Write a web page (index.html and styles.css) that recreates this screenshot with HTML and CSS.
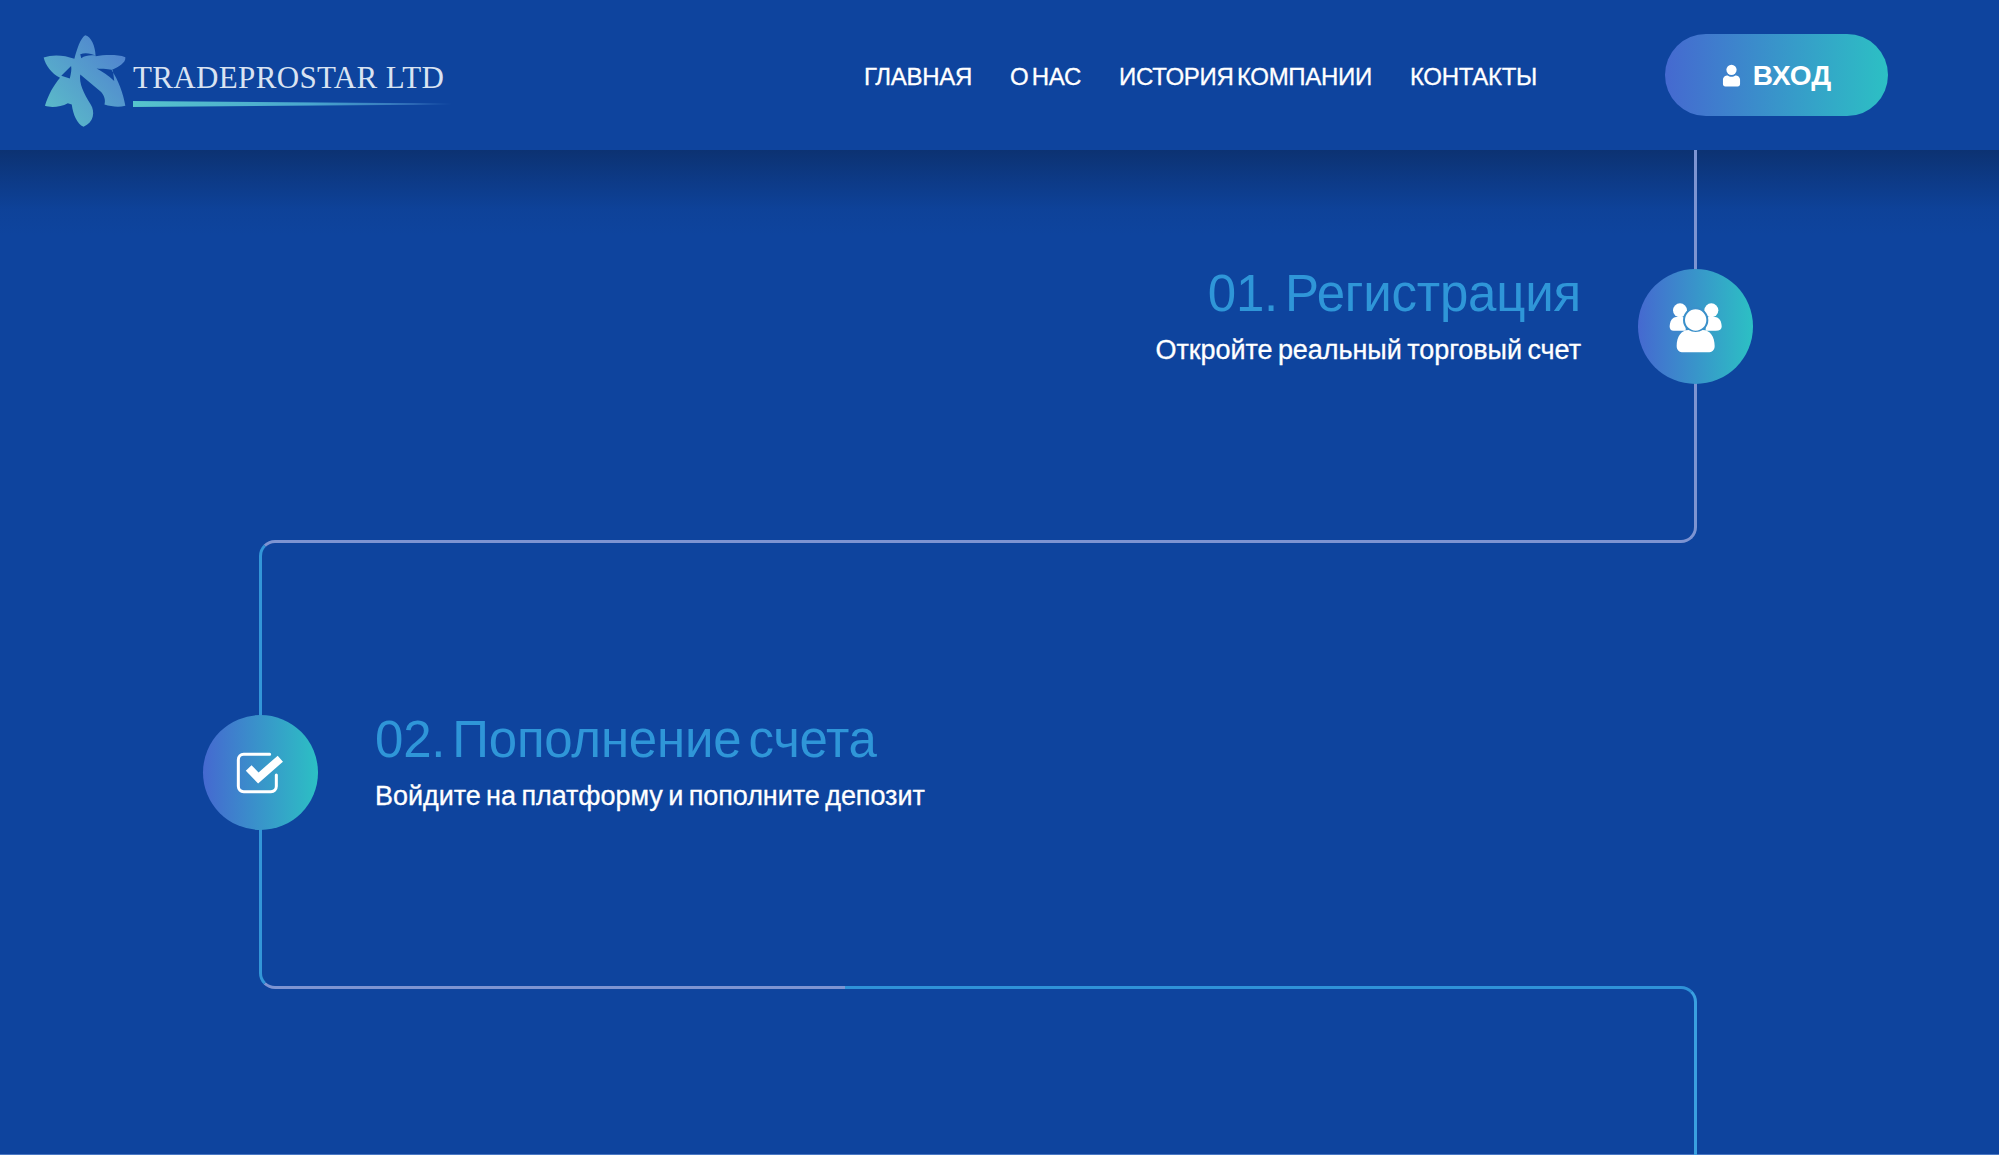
FILE: index.html
```html
<!DOCTYPE html>
<html lang="ru">
<head>
<meta charset="utf-8">
<title>TRADEPROSTAR LTD</title>
<link rel="stylesheet" href="styles.css">
</head>
<body>
<header class="header">
  <a class="logo" href="#">
    <svg class="logo-mark" viewBox="36 26 254 284" aria-hidden="true">
      <defs>
        <linearGradient id="logoFill" x1="0" y1="1" x2="1" y2="0">
          <stop offset="0" stop-color="#5cc2c8"/>
          <stop offset="1" stop-color="#4f7cd0"/>
        </linearGradient>
      </defs>
      <path fill="url(#logoFill)" fill-rule="evenodd" d="M165 28C183 32 196 60 197 92C225 88 262 86 288 95C290 112 268 124 246 134C266 165 282 205 288 244C266 250 245 246 224 240C228 228 224 214 214 202L150 148C146 175 160 205 182 240C196 262 192 295 160 308C140 300 128 270 124 240L112 236C90 248 60 250 42 244C52 210 68 182 88 158C62 145 44 120 38 96C65 86 100 88 132 100C140 70 150 38 165 28ZM122 122L92 152L118 160C122 145 124 132 122 122ZM200 130C220 133 240 130 250 136L254 168C235 150 218 140 200 130ZM150 86C165 80 185 84 197 90C180 88 165 90 153 98Z"/>
    </svg>
    <span class="logo-text">
      <span class="logo-name">TRADEPROSTAR LTD</span>
      <span class="logo-rule"></span>
    </span>
  </a>
  <nav class="nav">
    <a href="#">ГЛАВНАЯ</a>
    <a href="#">О НАС</a>
    <a href="#">ИСТОРИЯ КОМПАНИИ</a>
    <a href="#">КОНТАКТЫ</a>
  </nav>
  <a class="login" href="#">
    <svg class="login-icon" viewBox="0 0 20 24" aria-hidden="true">
      <circle cx="10" cy="6" r="5.4" fill="#fff"/>
      <path d="M1 21v-4.500C1 13.500 3.500 12 6 12c1 .8 2.500 1.300 4 1.300s3-.5 4-1.300c2.500 0 5 1.500 5 4.500V21c0 1.500-1 2.500-2.500 2.500h-13C2 23.500 1 22.500 1 21Z" fill="#fff"/>
    </svg>
    <span class="login-label">ВХОД</span>
  </a>
</header>

<main class="timeline">
  <section class="step step-one">
    <div class="step-copy">
      <h2 class="step-title">01. Регистрация</h2>
      <p class="step-text">Откройте реальный торговый счет</p>
    </div>
    <div class="step-badge">
      <svg viewBox="1 4 270 270" aria-hidden="true">
        <g fill="#fff">
          <circle cx="88" cy="89" r="21"/>
          <circle cx="182" cy="89" r="21"/>
          <path d="M57 138c0-16 8-29 20-29h18c6 0 10 5 10 12v29H69c-8 0-12-5-12-12Z"/>
          <path d="M213 138c0-16-8-29-20-29h-18c-6 0-10 5-10 12v29h30c12 0 18-5 18-12Z"/>
        </g>
        <circle class="badge-head" cx="135" cy="118" r="35"/>
        <path class="badge-body" d="M78 196c0-28 14-48 36-48 6 4 13 6 21 6s15-2 21-6c22 0 36 20 36 48 0 12-8 19-20 19H98c-12 0-20-7-20-19Z"/>
      </svg>
    </div>
  </section>

  <section class="step step-two">
    <div class="step-badge">
      <svg viewBox="4 8 240 240" aria-hidden="true">
        <path class="check-box" d="M150 72H72a16 16 0 0 0-16 16v80a16 16 0 0 0 16 16h82a16 16 0 0 0 16-16v-34"/>
        <path class="check-mark" d="M87 113l29 30 66-58"/>
      </svg>
    </div>
    <div class="step-copy">
      <h2 class="step-title">02. Пополнение счета</h2>
      <p class="step-text">Войдите на платформу и пополните депозит</p>
    </div>
  </section>

  <section class="step step-three"></section>
</main>
</body>
</html>
```

FILE: styles.css
```css
* {
  box-sizing: border-box;
}

html,
body {
  margin: 0;
  height: 100%;
}

body {
  position: relative;
  height: 1155px;
  overflow: hidden;
  background: #0e449e;
  font-family: "Liberation Sans", Arial, sans-serif;
  color: #fff;
}

body::after {
  content: "";
  position: absolute;
  left: 0;
  right: 0;
  bottom: 0;
  height: 1px;
  background: #4a78c4;
}

a {
  color: inherit;
  text-decoration: none;
}

.header {
  position: relative;
  z-index: 2;
  display: flex;
  align-items: center;
  height: 150px;
  padding: 0 111px 0 43px;
  background: #0e449e;
}

.header::after {
  content: "";
  position: absolute;
  top: 100%;
  left: 0;
  right: 0;
  height: 85px;
  background: linear-gradient(180deg, #0c3272 0%, rgba(12, 52, 120, 0.62) 35%, rgba(13, 60, 138, 0.25) 70%, rgba(14, 68, 158, 0) 100%);
  pointer-events: none;
}

.logo {
  display: flex;
  align-self: flex-start;
  align-items: flex-start;
  gap: 7px;
  margin-top: 34px;
}

.logo-mark {
  display: block;
  width: 83px;
  height: 94px;
  flex: none;
}

.logo-text {
  display: flex;
  flex-direction: column;
  width: 319px;
  padding-top: 26px;
}

.logo-name {
  font-family: "Liberation Serif", "Times New Roman", serif;
  font-size: 31px;
  line-height: 36px;
  letter-spacing: 0.35px;
  color: #d9e3f2;
  white-space: nowrap;
}

.logo-rule {
  height: 6px;
  margin-top: 5px;
  background: linear-gradient(90deg, #56c4cc 0%, #4aa8cf 55%, rgba(74, 140, 205, 0.6) 88%, rgba(74, 130, 200, 0) 100%);
  clip-path: polygon(0 0, 100% 40%, 100% 60%, 0 100%);
}

.nav {
  display: flex;
  gap: 38px;
  margin-left: 412px;
  padding-top: 3px;
  font-size: 24px;
  letter-spacing: -0.3px;
  word-spacing: -3px;
  -webkit-text-stroke: 0.3px #fff;
}

.nav a {
  white-space: nowrap;
}

.login {
  display: flex;
  align-items: center;
  justify-content: center;
  gap: 12px;
  width: 223px;
  height: 82px;
  margin-left: auto;
  border-radius: 41px;
  background: linear-gradient(90deg, #4569d0 0%, #2cc0c4 100%);
  font-size: 28px;
  font-weight: 700;
}

.login-icon {
  width: 19px;
  height: 23px;
}

.login-label {
  padding-top: 2px;
}

.timeline {
  position: relative;
  z-index: 3;
  width: 1438px;
  margin-left: 259px;
}

.step {
  display: flex;
  align-items: flex-start;
  gap: 57px;
}

.step-one {
  justify-content: flex-end;
  height: 393px;
  margin-left: 20px;
  padding-top: 119px;
  border-right: 3px solid #7d94d2;
  border-bottom: 3px solid #7d94d2;
  border-bottom-right-radius: 16px;
}

.step-two {
  height: 449px;
  margin-top: -3px;
  margin-right: 20px;
  padding-top: 172px;
  border-top: 3px solid #7d94d2;
  border-left: 3px solid #3396d8;
  border-bottom: 3px solid #7d94d2;
  border-top-left-radius: 16px;
  border-bottom-left-radius: 16px;
}

.step-three {
  height: 200px;
  margin-top: -3px;
  margin-left: 586px;
  border-top: 3px solid #2f92d8;
  border-right: 3px solid #3aa0e0;
  border-top-right-radius: 16px;
}

.step-badge {
  display: flex;
  flex: none;
  align-items: center;
  justify-content: center;
  width: 115px;
  height: 115px;
  border-radius: 50%;
  background: linear-gradient(90deg, #4569d0 0%, #2cc0c4 100%);
}

.step-one .step-badge {
  margin-right: -59px;
}

.step-two .step-badge {
  margin-left: -59px;
}

.step-one .step-badge svg {
  width: 90px;
  height: 90px;
}

.step-two .step-badge svg {
  width: 80px;
  height: 80px;
}

.badge-head {
  fill: #fff;
  stroke: #3b90ca;
  stroke-width: 6;
}

.badge-body {
  fill: #fff;
}

.check-box {
  fill: none;
  stroke: #fff;
  stroke-width: 9;
  stroke-linecap: round;
}

.check-mark {
  fill: none;
  stroke: #fff;
  stroke-width: 24;
}

.step-copy {
  margin-top: -4px;
}

.step-one .step-copy {
  text-align: right;
}

.step-title {
  margin: 0;
  font-size: 51px;
  line-height: 58px;
  font-weight: 400;
  letter-spacing: -0.2px;
  word-spacing: -7px;
  color: #2f96d8;
  white-space: nowrap;
}

.step-text {
  margin: 12px 0 0;
  font-size: 27px;
  line-height: 30px;
  letter-spacing: -0.05px;
  word-spacing: -2px;
  -webkit-text-stroke: 0.3px #fff;
  white-space: nowrap;
}
```
